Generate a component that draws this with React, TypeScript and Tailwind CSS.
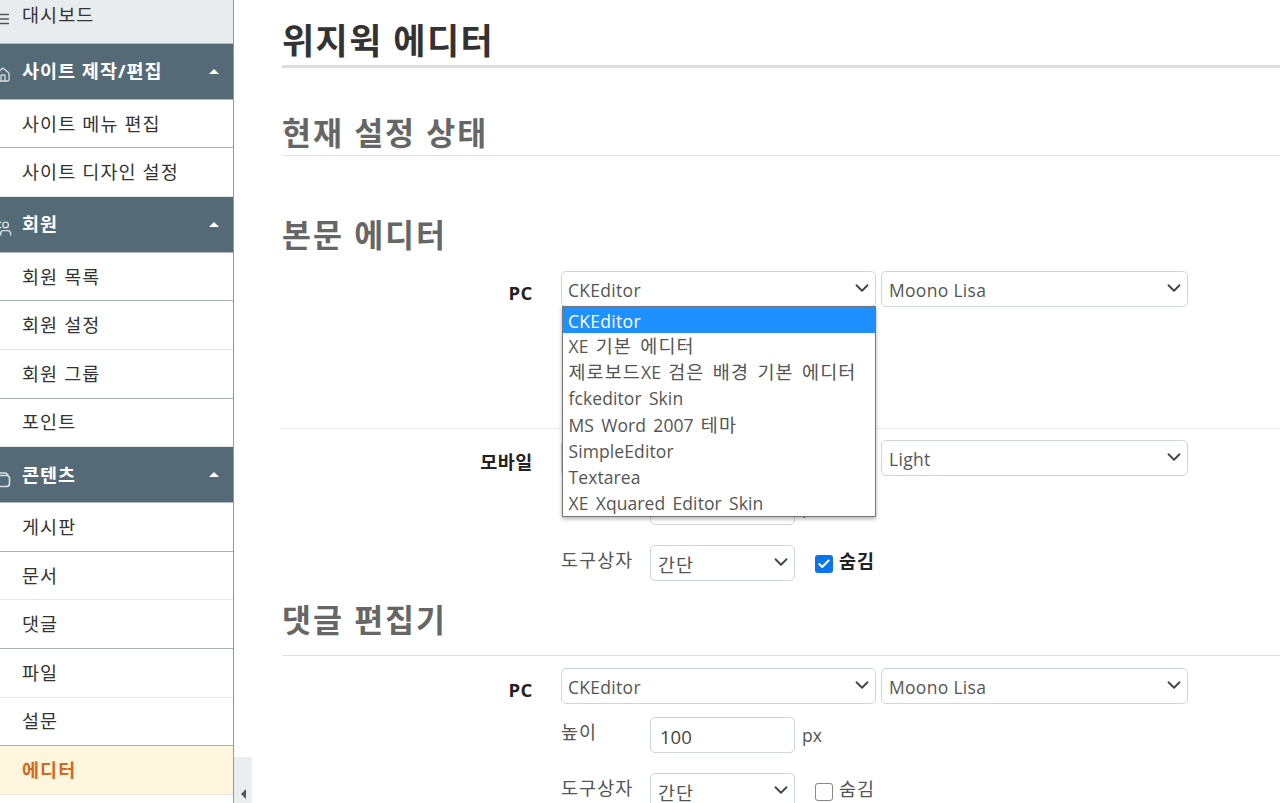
import React from 'react';
import { Home, Users, ChevronDown, Check } from 'lucide-react';

const sans = 'font-["Open_Sans","Noto_Sans_CJK_KR",sans-serif]';

// hangul runs sit a bit larger and looser than the latin ones
function Mixed({ text }: { text: string }) {
  return (
    <>
      {text.split(/([가-힣]+(?: [가-힣]+)*)/).map((part, i) =>
        /[가-힣]/.test(part) ? (
          <span key={i} className="text-[18.5px] tracking-[1.1px]">{part}</span>
        ) : (
          <span key={i}>{part}</span>
        )
      )}
    </>
  );
}

function Group({ icon, label }: { icon: React.ReactNode; label: string }) {
  return (
    <div className="h-[56px] flex items-center bg-[#546b77] text-white font-bold text-[18.5px] tracking-[1px] border-b border-[#aeb8bd]">
      <span className="w-[22px] shrink-0 flex pt-[8px] text-[#d5dcdf] -translate-x-[5px]">{icon}</span>
      <span className="flex-1">{label}</span>
      <span className="w-0 h-0 mr-[14px] border-x-[5px] border-x-transparent border-b-[5px] border-b-white" />
    </div>
  );
}

function Item({ label, strong }: { label: string; strong?: boolean }) {
  return (
    <div className={`h-[48.6px] flex items-center pl-[22px] text-[18.5px] tracking-[1.1px] text-[#333] border-b ${strong ? 'border-[#a9b0b3]' : 'border-[#e4e6e8]'}`}>
      {label}
    </div>
  );
}

function Select({ value, width }: { value: string; width: string }) {
  return (
    <div className={`${width} h-[36px] shrink-0 flex items-center justify-between pr-[2px] border border-[#ced4da] rounded-[5px] bg-white text-[17.5px] tracking-[0.3px] text-[#555]`}>
      <span className="pt-[3px]"><Mixed text={value} /></span>
      <ChevronDown size={22} strokeWidth={2} className="shrink-0 text-[#444] -mt-[2px]" />
    </div>
  );
}

function Options({ label, checked, heightValue }: { label?: boolean; checked: boolean; heightValue: string }) {
  return (
    <>
      <div className="flex items-center h-[36px] mt-[13px] text-[17.5px] text-[#555]">
        <span className="w-[89px] -mt-[6px]">{label && <Mixed text="높이" />}</span>
        <div className="w-[145px] h-[36px] flex items-center pl-[9px] pt-[4px] border border-[#ced4da] rounded-[5px] text-[18.5px] text-[#444]">{heightValue}</div>
        <span className="ml-[7px]">px</span>
      </div>
      <div className="flex items-center h-[36px] mt-[20px] text-[17.5px] text-[#555]">
        <span className="w-[89px] -mt-[6px]"><Mixed text="도구상자" /></span>
        <Select value="간단" width="w-[145px] pl-[7px]" />
        {checked ? (
          <span className="ml-[20px] mt-[2px] w-[18px] h-[18px] rounded-[3px] bg-[#0b75e8] flex items-center justify-center">
            <Check size={14} strokeWidth={3.5} className="text-white" />
          </span>
        ) : (
          <span className="ml-[20px] mt-[2px] w-[18px] h-[18px] rounded-[3px] border border-[#888] bg-white" />
        )}
        <span className={`ml-[6px] -mt-[4px] ${checked ? 'font-bold text-[#222]' : ''}`}><Mixed text="숨김" /></span>
      </div>
    </>
  );
}

function Editor({ label, first, second, children }: { label: string; first: string; second: string; children: React.ReactNode }) {
  return (
    <div className="flex">
      <div className="w-[251px] pt-[8px] text-right text-[18.5px] tracking-[0.6px] font-bold text-[#222]">{label}</div>
      <div className="ml-[28px]">
        <div className="flex gap-[5px]">
          <Select value={first} width="w-[315px] pl-[6px]" />
          <Select value={second} width="w-[307px] pl-[7px]" />
        </div>
        {children}
      </div>
    </div>
  );
}

const options = ['XE 기본 에디터', '제로보드XE 검은 배경 기본 에디터', 'fckeditor Skin', 'MS Word 2007 테마', 'SimpleEditor', 'Textarea', 'XE Xquared Editor Skin'];

const h2 = 'text-[31.5px] font-bold text-[#666] tracking-[2px]';

export default function App() {
  return (
    <div className={`${sans} h-[803px] w-[1280px] overflow-hidden flex bg-white`}>
      {/* Sidebar */}
      <aside className="w-[234px] shrink-0 border-r border-[#8f9a9f] overflow-hidden h-[803px]">
        <div className="h-[43.6px] flex items-center bg-[#e9ecef] text-[18.5px] tracking-[1.1px] text-[#333] border-b border-[#b5bcc0] pb-[13px]">
          <span className="w-[22px] shrink-0 pt-[8px] -translate-x-[5px]">
            <svg width="14" height="14" viewBox="0 0 14 14" fill="none" stroke="#555" strokeWidth="1.3">
              <path d="M4 2.5h10M0 7h14M0 11.5h14" />
            </svg>
          </span>
          대시보드
        </div>
        <Group icon={<Home size={16} className="shrink-0" />} label="사이트 제작/편집" />
        <Item label="사이트 메뉴 편집" strong />
        <Item label="사이트 디자인 설정" />
        <Group icon={<Users size={17} className="shrink-0 -scale-x-100" />} label="회원" />
        <Item label="회원 목록" strong />
        <Item label="회원 설정" />
        <Item label="회원 그룹" strong />
        <Item label="포인트" />
        <Group
          icon={
            <svg width="16" height="18" viewBox="0 0 16 18" fill="none" stroke="currentColor" strokeWidth="1.7" className="shrink-0">
              <path d="M3 3h8l2.5 2.5M3 5.5h8.5a3 3 0 0 1 3 3v5a3 3 0 0 1-3 3H4a3 3 0 0 1-3-3v-8a2.5 2.5 0 0 1 2-2.5" />
            </svg>
          }
          label="콘텐츠"
        />
        <Item label="게시판" strong />
        <Item label="문서" />
        <Item label="댓글" strong />
        <Item label="파일" />
        <Item label="설문" strong />
        <div className="h-[49px] flex items-center pl-[22px] text-[18.5px] tracking-[1.1px] font-bold text-[#d2691e] bg-[#fff6df] border-b border-[#e8e4d8]">에디터</div>
      </aside>

      {/* Collapse handle */}
      <div className="w-[18px] h-[46px] shrink-0 self-end bg-[#e9eef1] flex items-end justify-center pb-[3px]">
        <span className="w-0 h-0 mb-[1px] border-y-[5px] border-y-transparent border-r-[5px] border-r-[#555]" />
      </div>

      {/* Main */}
      <main className="flex-1 min-w-0 pl-[30px] pt-[17px]">
        <h1 className="h-[51px] text-[35px] leading-[47px] font-bold text-[#333] border-b-[3px] border-[#ddd] tracking-[1.4px]">위지윅 에디터</h1>
        <h2 className={`mt-[42px] h-[46px] leading-[46px] border-b border-[#e0e0e0] ${h2}`}>현재 설정 상태</h2>
        <h2 className={`mt-[57px] leading-[44px] ${h2}`}>본문 에디터</h2>

        <div className="relative mt-[14px]">
          <Editor label="PC" first="CKEditor" second="Moono Lisa">
            <div className="h-[121px]" />
          </Editor>
          {/* Open select list */}
          <div className="absolute left-[280px] top-[35px] w-[314px] bg-white border border-[#767676] shadow-[0_2px_4px_rgba(0,0,0,0.3)] text-[17.5px] tracking-[0.1px] [word-spacing:2.5px] text-[#555] z-10">
            <div className="h-[26px] leading-[28px] pl-[5px] bg-[#1e90ff] text-white tracking-[0.3px]">CKEditor</div>
            {options.map((o) => (
              <div key={o} className="h-[26.2px] leading-[26px] pl-[5.5px]"><Mixed text={o} /></div>
            ))}
          </div>
          <div className="pt-[11px] border-t border-dotted border-[#ddd]">
            <Editor label="모바일" first="" second="Light">
              <Options checked heightValue="" />
            </Editor>
          </div>
        </div>

        <h2 className={`mt-[17px] h-[58px] leading-[44px] border-b border-[#e0e0e0] ${h2}`}>댓글 편집기</h2>
        <div className="mt-[12px]">
          <Editor label="PC" first="CKEditor" second="Moono Lisa">
            <Options label checked={false} heightValue="100" />
          </Editor>
        </div>
      </main>
    </div>
  );
}
